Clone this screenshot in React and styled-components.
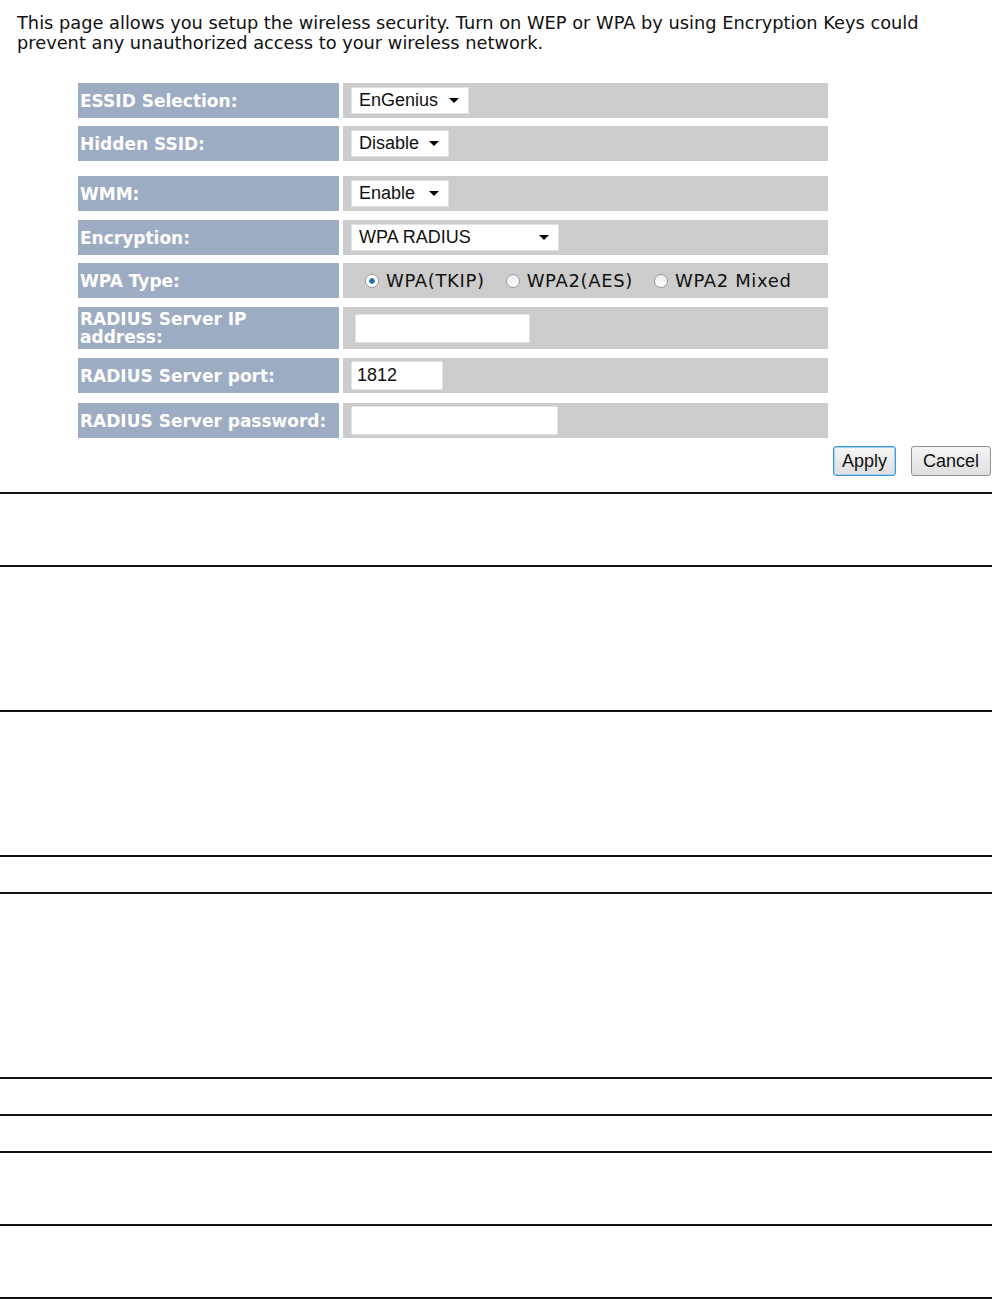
import React from 'react'
import styled, { createGlobalStyle } from 'styled-components'

const GlobalStyle = createGlobalStyle`
  body {
    margin: 0;
    background: #fff;
    font-family: 'DejaVu Sans', Verdana, sans-serif;
  }
`

const Page = styled.div`
  width: 992px;
`

const Intro = styled.p`
  margin: 0;
  padding: 13px 0 0 17px;
  font-size: 17.8px;
  line-height: 20px;
  color: #111;
`

const Form = styled.div`
  margin: 30px 0 0 78px;
  width: 750px;
  display: flex;
  flex-direction: column;
  gap: 8px;
`

const Row = styled.div`
  display: flex;
  gap: 4px;
  min-height: ${p => (p.$tall ? '42px' : '35px')};
  margin-top: ${p => p.$spaced || 0}px;
`

const Label = styled.div`
  width: 261px;
  flex: none;
  box-sizing: border-box;
  background: #9dacc3;
  color: #fff;
  font-weight: bold;
  font-size: 17px;
  line-height: 18px;
  padding: 2px 2px;
  display: flex;
  align-items: center;
`

const Value = styled.div`
  flex: 1;
  background: #cccccc;
  display: flex;
  align-items: center;
  padding-left: ${p => p.$pad || 8}px;
`

const Select = styled.div`
  height: 27px;
  width: ${p => p.$w}px;
  box-sizing: border-box;
  background: #fff;
  border: 1px solid #e2e2e2;
  display: flex;
  align-items: center;
  justify-content: space-between;
  padding: 0 9px 0 7px;
  font-family: 'Liberation Sans', Arial, sans-serif;
  font-size: 18px;
  color: #111;
`

const Arrow = styled.span`
  width: 0;
  height: 0;
  border-left: 5px solid transparent;
  border-right: 5px solid transparent;
  border-top: 5px solid #000;
`

const TextBox = styled.div`
  height: 29px;
  width: ${p => p.$w}px;
  box-sizing: border-box;
  background: #fff;
  border: 1px solid #e4e4e4;
  border-radius: 2px;
  padding: 0 5px;
  display: flex;
  align-items: center;
  font-family: 'Liberation Sans', Arial, sans-serif;
  font-size: 18px;
  color: #111;
`

const RadioGroup = styled.div`
  display: flex;
  align-items: center;
  padding-left: 14px;
  gap: 21px;
  font-size: 18px;
  letter-spacing: 0.65px;
  color: #111;
`

const RadioItem = styled.label`
  display: flex;
  align-items: center;
  gap: 7px;
`

const Radio = styled.span`
  width: 14px;
  height: 14px;
  box-sizing: border-box;
  border-radius: 50%;
  border: 1px solid #9a9a9a;
  background: ${p =>
    p.$checked
      ? 'radial-gradient(circle, #1d5d9b 0, #2f7fc8 2.5px, #fff 3.2px)'
      : 'linear-gradient(#ececec, #fff)'};
`

const ButtonRow = styled.div`
  display: flex;
  justify-content: flex-end;
  gap: 15px;
  margin: 8px 1px 0 0;
`

const Button = styled.button`
  height: 30px;
  padding: 0 ${p => p.$px}px;
  font-family: 'Liberation Sans', Arial, sans-serif;
  font-size: 18px;
  color: #111;
  border-radius: 3px;
  border: 1px solid ${p => (p.$focus ? '#3c9bd6' : '#8e8e8e')};
  box-shadow: ${p => (p.$focus ? '0 0 0 1px #9fd0f0 inset' : 'none')};
  background: linear-gradient(#f6f6f6, #dedede);
`

const Rules = styled.div`
  margin-top: 16px;
`

const Rule = styled.div`
  height: ${p => p.$h}px;
  border-top: 2px solid #111;
  box-sizing: border-box;
`

const rules = [73, 145, 145, 37, 185, 37, 37, 73, 73, 2]

export default function App() {
  return (
    <Page>
      <GlobalStyle />
      <Intro>
        This page allows you setup the wireless security. Turn on WEP or WPA by using Encryption Keys could
        <br />
        prevent any unauthorized access to your wireless network.
      </Intro>

      <Form>
        <Row>
          <Label>ESSID Selection:</Label>
          <Value>
            <Select $w={118}>EnGenius <Arrow /></Select>
          </Value>
        </Row>
        <Row>
          <Label>Hidden SSID:</Label>
          <Value>
            <Select $w={98}>Disable <Arrow /></Select>
          </Value>
        </Row>
        <Row $spaced={7}>
          <Label>WMM:</Label>
          <Value>
            <Select $w={98}>Enable <Arrow /></Select>
          </Value>
        </Row>
        <Row $spaced={1}>
          <Label>Encryption:</Label>
          <Value>
            <Select $w={208}>WPA RADIUS <Arrow /></Select>
          </Value>
        </Row>
        <Row>
          <Label>WPA Type:</Label>
          <Value>
            <RadioGroup>
              <RadioItem><Radio $checked />WPA(TKIP)</RadioItem>
              <RadioItem><Radio />WPA2(AES)</RadioItem>
              <RadioItem><Radio />WPA2 Mixed</RadioItem>
            </RadioGroup>
          </Value>
        </Row>
        <Row $tall $spaced={1}>
          <Label>RADIUS Server IP<br />address:</Label>
          <Value $pad={12}>
            <TextBox $w={175} />
          </Value>
        </Row>
        <Row $spaced={1}>
          <Label>RADIUS Server port:</Label>
          <Value>
            <TextBox $w={92}>1812</TextBox>
          </Value>
        </Row>
        <Row $spaced={2}>
          <Label>RADIUS Server password:</Label>
          <Value>
            <TextBox $w={207} />
          </Value>
        </Row>
      </Form>

      <ButtonRow>
        <Button $focus $px={8}>Apply</Button>
        <Button $px={11}>Cancel</Button>
      </ButtonRow>

      <Rules>
        {rules.map((h, i) => (
          <Rule key={i} $h={h} />
        ))}
      </Rules>
    </Page>
  )
}
